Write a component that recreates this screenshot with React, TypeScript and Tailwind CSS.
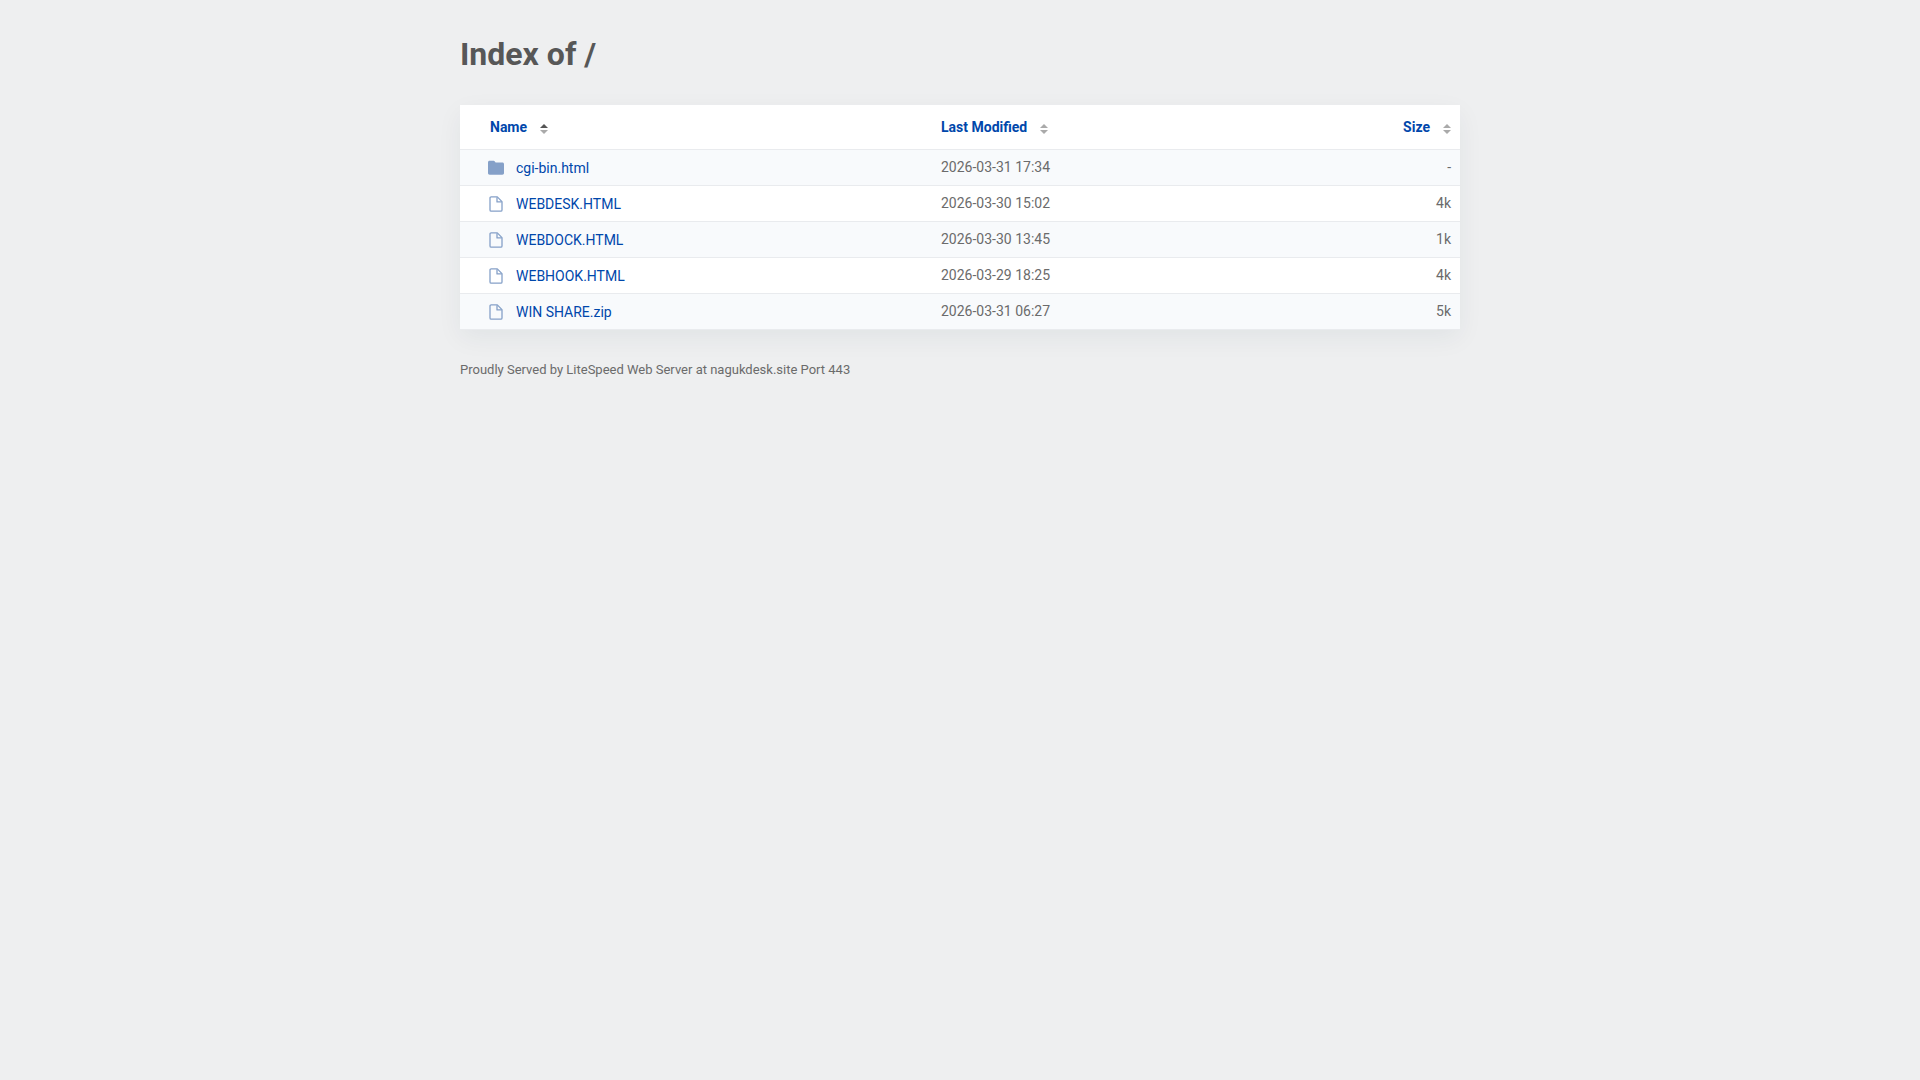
import { useState } from 'react';

type SortKey = 'name' | 'modified' | 'size';

interface Entry {
  name: string;
  modified: string;
  size: string;
  isFolder?: boolean;
}

const entries: Entry[] = [
  { name: 'cgi-bin.html', modified: '2026-03-31 17:34', size: '-', isFolder: true },
  { name: 'WEBDESK.HTML', modified: '2026-03-30 15:02', size: '4k' },
  { name: 'WEBDOCK.HTML', modified: '2026-03-30 13:45', size: '1k' },
  { name: 'WEBHOOK.HTML', modified: '2026-03-29 18:25', size: '4k' },
  { name: 'WIN SHARE.zip', modified: '2026-03-31 06:27', size: '5k' },
];

const columns: { key: SortKey; label: string; className: string }[] = [
  { key: 'name', label: 'Name', className: 'w-[47%] pl-[30px] pr-2 text-left' },
  { key: 'modified', label: 'Last Modified', className: 'px-[11px] text-left' },
  { key: 'size', label: 'Size', className: 'w-[15%] px-[9px] text-right' },
];

function FolderIcon() {
  return (
    <svg viewBox="0 0 16 16" className="h-4 w-4 shrink-0" fill="#85a0c8" aria-hidden="true">
      <path d="M0 2.500C0 1.400.6.800 1.700.800h4c.5 0 .8.2 1.100.6l.8 1.100h6.700c1.100 0 1.700.6 1.700 1.700v8.900c0 1.100-.6 1.700-1.700 1.700H1.700c-1.100 0-1.700-.6-1.700-1.700z" />
    </svg>
  );
}

function FileIcon() {
  return (
    <svg viewBox="0 0 16 16" className="h-4 w-4 shrink-0" fill="none" stroke="#85a0c8" strokeWidth="1.3" strokeLinejoin="round" aria-hidden="true">
      <path d="M9.300.9H3.200c-.8 0-1.200.4-1.200 1.200v11.800c0 .8.4 1.200 1.200 1.200h9.600c.8 0 1.200-.4 1.200-1.200V5.600z" />
      <path d="M9 1.200v4.700h4.700" />
    </svg>
  );
}

function SortIcon({ active, ascending }: { active: boolean; ascending: boolean }) {
  return (
    <svg viewBox="0 0 8 10" className="mt-[3px] h-[10px] w-2" aria-hidden="true">
      <path d="M0 4 4 0l4 4z" fill={active && ascending ? '#555' : '#aaa'} />
      <path d="M0 6h8l-4 4z" fill={active && !ascending ? '#555' : '#aaa'} />
    </svg>
  );
}

export default function App() {
  const [sortKey, setSortKey] = useState<SortKey>('name');
  const [ascending, setAscending] = useState(true);

  const handleSort = (key: SortKey) => {
    setAscending(key === sortKey ? !ascending : true);
    setSortKey(key);
  };

  const sorted = [...entries].sort((a, b) => {
    const order = a[sortKey].localeCompare(b[sortKey]);
    return ascending ? order : -order;
  });

  return (
    <div className="min-h-screen bg-[#eeeff0] py-8 font-[Roboto,sans-serif] text-sm text-[#575757]">
      <main className="mx-auto max-w-[1000px]">
        <h1 className="text-[32px] leading-[44px] font-bold">Index of /</h1>

        <table className="mt-[29px] w-full table-fixed border-collapse bg-white shadow-[0_8px_24px_#00303c0f]">
          <thead>
            <tr className="h-11 border-b border-[#e9ebee]">
              {columns.map((column) => (
                <th
                  key={column.key}
                  className={column.className}
                  aria-sort={sortKey !== column.key ? 'none' : ascending ? 'ascending' : 'descending'}
                >
                  <button
                    type="button"
                    onClick={() => handleSort(column.key)}
                    className="inline-flex cursor-pointer items-center gap-[13px] align-middle font-bold text-[#0047ab]"
                  >
                    {column.label}
                    <SortIcon active={sortKey === column.key} ascending={ascending} />
                  </button>
                </th>
              ))}
            </tr>
          </thead>
          <tbody>
            {sorted.map((entry) => (
              <tr key={entry.name} className="h-9 border-b border-[#e9ebee] odd:bg-[#f8fafc]">
                <td className="pt-px pr-2 pl-7">
                  <a href={entry.name} className="flex items-center gap-3 text-[#0047ab] hover:underline">
                    {entry.isFolder ? <FolderIcon /> : <FileIcon />}
                    {entry.name}
                  </a>
                </td>
                <td className="px-[11px] text-[#6b6b6b]">{entry.modified}</td>
                <td className="px-[9px] text-right text-[#6b6b6b]">{entry.size}</td>
              </tr>
            ))}
          </tbody>
        </table>

        <footer className="mt-[30px] text-[13px] leading-5 text-[#6b6b6b]">
          Proudly Served by LiteSpeed Web Server at nagukdesk.site Port 443
        </footer>
      </main>
    </div>
  );
}
